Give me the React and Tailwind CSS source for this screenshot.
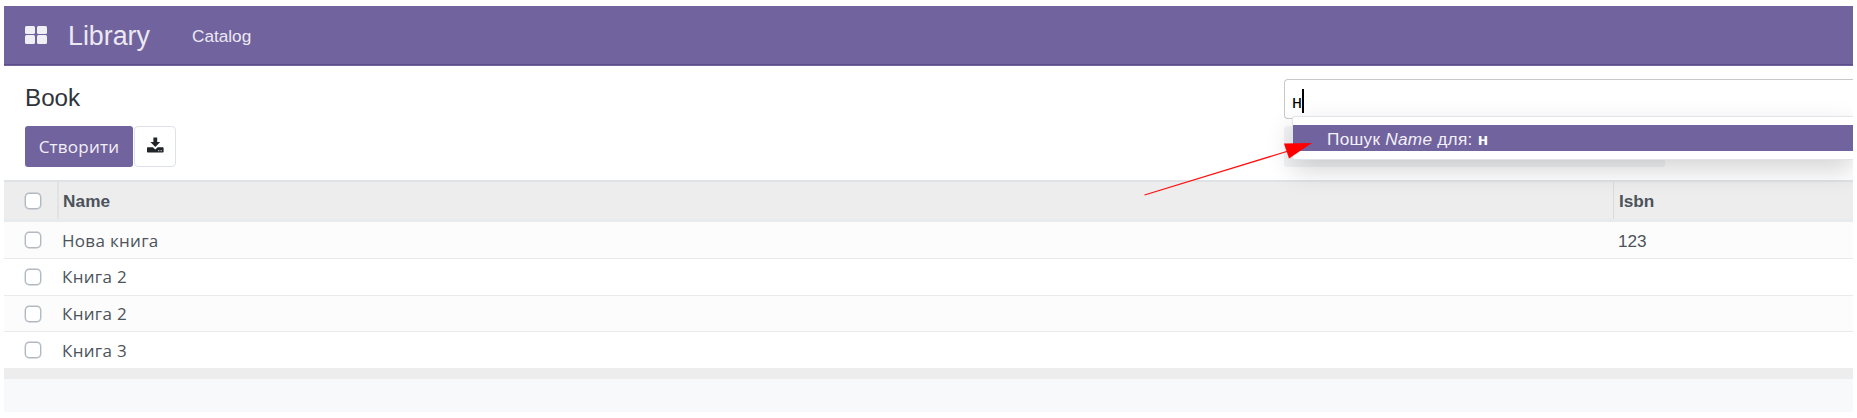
import React from "react";

const rows = [
  { name: "Нова книга", isbn: "123", cls: "h-[37px] bg-[#fcfcfc]" },
  { name: "Книга 2", isbn: "", cls: "h-[37px] bg-white pb-px" },
  { name: "Книга 2", isbn: "", cls: "h-[36px] bg-[#fcfcfc]" },
  { name: "Книга 3", isbn: "", cls: "h-[36px] bg-white border-b-0!" },
];

function Checkbox() {
  return (
    <span className="block size-[16px] shrink-0 rounded-[4px] border-[1.5px] border-[#b2b9c0] bg-white shadow-[0_0_0_0.4px_#b2b9c0]" />
  );
}

function DownloadIcon() {
  return (
    <svg width="17" height="16" viewBox="0 0 17 16" fill="currentColor">
      <path d="M6.4 0.5h3.8v4.4h3L8.3 10 3.4 4.9h3z" />
      <path d="M0.8 10.3h5.1l2.4 2.3 2.4-2.3h5.1c.5 0 .8.3.8.8v3.7c0 .5-.3.8-.8.8H.8c-.5 0-.8-.3-.8-.8v-3.7c0-.5.3-.8.8-.8zM11.2 13.2v1h1.1v-1zM13.6 13.2v1h1.1v-1z" fillRule="evenodd" />
    </svg>
  );
}

function NavBar() {
  return (
    <header className="flex h-[60px] items-center bg-[#71639e] pl-[21px] text-[#ece9f3] shadow-[inset_0_-1px_0_#71639e,inset_0_-2px_0_#5c4e8a]">
      <div className="mb-[3px] grid h-[18px] w-[22px] grid-cols-2 gap-x-[2px] gap-y-[1px]">
        <i className="rounded-[1.5px] bg-[#f1eff6]" />
        <i className="rounded-[1.5px] bg-[#f1eff6]" />
        <i className="rounded-[1.5px] bg-[#f1eff6]" />
        <i className="rounded-[1.5px] bg-[#f1eff6]" />
      </div>
      <span className="ml-[21px] w-[83px] text-[26.8px] leading-[58px]">Library</span>
      <span className="ml-[41px] text-[17.2px] leading-[60px]">Catalog</span>
    </header>
  );
}

function Search() {
  return (
    <div className="relative mt-[13px] h-[40px] w-[569px] rounded-l-[4px] border-[1.5px] border-r-0 border-[#c9c9c9] bg-white pl-[7px]">
      <div className="flex h-[42px] items-center text-[17.2px] text-black">
        <span className="mt-[2px] w-[10px] font-['Liberation_Sans',sans-serif] text-[18px]">н</span>
        <span className="h-[24px] w-[2px] bg-black" />
      </div>
      <div className="absolute top-[46px] -left-px h-[41px] w-[381px] rounded-[3px] bg-[#f3f4f5]" />
      <div className="absolute top-[36px] left-[7px] h-[44px] w-[561px] rounded-l-[3px] border border-r-0 border-[#e1e4e8] bg-white pt-[8px] shadow-[0_10px_26px_rgba(0,0,0,0.17)]">
        <div className="h-[26px] bg-[#71639e] pl-[34px] text-[17.2px] leading-[28px] tracking-[0.28px] whitespace-nowrap text-[#f3f1f8]">
          Пошук <em>Name</em> для: <b className="text-white">н</b>
        </div>
      </div>
    </div>
  );
}

export default function App() {
  return (
    <div className="relative h-[418px] w-[1857px] overflow-hidden bg-white px-[4px] pt-[6px] font-['Liberation_Sans',Arial,sans-serif]">
      <div className="h-[406px] w-[1849px] overflow-hidden bg-[#f8f9fb]">
        <NavBar />
        <section className="flex h-[114px] justify-between bg-white">
          <div className="pl-[21px]">
            <h1 className="mt-[17px] text-[24.2px] leading-[30px] text-[#30343a]">Book</h1>
            <div className="mt-[13px] flex">
              <button className="h-[41px] w-[108px] rounded-[3px] bg-[#71639e] font-['Open_Sans','Noto_Sans',sans-serif] text-[17px] tracking-[0.25px] text-[#f1eff6]">
                Створити
              </button>
              <button className="ml-px flex h-[41px] w-[42px] items-center justify-center rounded-[4px] border border-[#dee2e6] bg-white pb-[3px] text-[#212529]">
                <DownloadIcon />
              </button>
            </div>
          </div>
          <Search />
        </section>
        <div className="text-[17.2px] text-[#4c535b]">
          <div className="flex h-[42px] items-center border-t-2 border-b-3 border-t-[#dfe3e6] border-b-[#e7ebee] bg-[#ededed] pl-[21px] font-bold">
            <Checkbox />
            <div className="ml-[16px] flex h-full w-[1556px] items-center border-l-2 border-[#e0e2e4] pt-[2px] pl-[4px] tracking-[0.1px]">Name</div>
            <div className="flex h-full items-center border-l border-[#d8dadc] pt-[2px] pl-[5px]">Isbn</div>
          </div>
          {rows.map((r, i) => (
            <div key={i} className={"flex items-center border-b border-[#e7ebee] pl-[21px] " + r.cls}>
              <Checkbox />
              <div className="ml-[21px] w-[1556px] pt-px font-['Open_Sans','Noto_Sans',sans-serif] text-[17px] tracking-[0.3px]">
                {r.name}
              </div>
              <div className="pt-[3px]">{r.isbn}</div>
            </div>
          ))}
          <div className="h-[11px] bg-[#ededed]" />
        </div>
      </div>
      <svg className="absolute top-[130px] left-[1140px]" width="180" height="70" viewBox="0 0 180 70">
        <path d="M4.5 65 L150 20.5" stroke="#ff1010" strokeWidth="1.3" />
        <path d="M144 13.5 L172 13 L149 28.5 Z" fill="#ff0000" />
      </svg>
    </div>
  );
}
